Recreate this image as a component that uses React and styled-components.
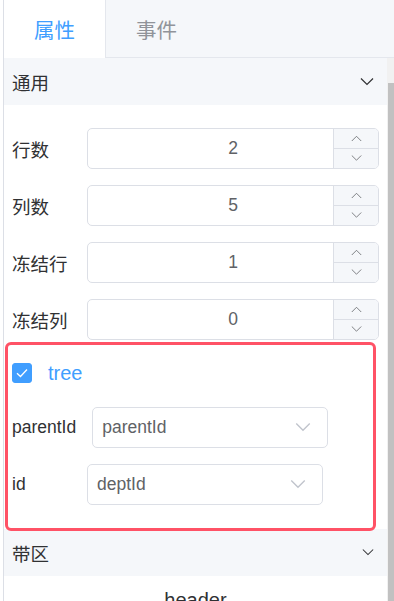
import React, { useState } from "react";
import styled, { createGlobalStyle } from "styled-components";

const GlobalStyle = createGlobalStyle`
  html, body {
    margin: 0;
    padding: 0;
    background: #ffffff;
  }
  body {
    font-family: "Liberation Sans", "Noto Sans CJK SC", sans-serif;
  }
`;

const Page = styled.div`
  width: 394px;
  height: 601px;
  overflow: hidden;
  padding-left: 3px;
  box-sizing: border-box;
  background: #ffffff;
`;

const Frame = styled.div`
  height: 100%;
  border-left: 1px solid #dcdfe6;
  display: flex;
  flex-direction: column;
`;

const TabBar = styled.div`
  display: flex;
  height: 58px;
  flex-shrink: 0;
  background: #f5f7fa;
  border-bottom: 1px solid #e4e7ed;
  box-sizing: border-box;
`;

const Tab = styled.div`
  padding: 0 30px;
  display: flex;
  align-items: center;
  font-size: 20.5px;
  color: ${(p) => (p.$active ? "#409eff" : "#909399")};
  background: ${(p) => (p.$active ? "#ffffff" : "transparent")};
  border-right: 1px solid ${(p) => (p.$active ? "#e4e7ed" : "transparent")};
  margin-bottom: ${(p) => (p.$active ? "-1px" : "0")};
  cursor: pointer;
`;

const Body = styled.div`
  flex: 1;
  display: flex;
  min-height: 0;
`;

const Content = styled.div`
  flex: 1;
  overflow: hidden;
`;

const Scrollbar = styled.div`
  width: 7px;
  background: #f1f1f1;
  display: flex;
  justify-content: flex-end;
  padding-top: 25px;
  box-sizing: border-box;
`;

const Thumb = styled.div`
  width: 6px;
  height: 100%;
  background: #c1c1c1;
`;

const SectionHeader = styled.div`
  height: 47px;
  display: flex;
  align-items: center;
  justify-content: space-between;
  padding: 0 13px 0 8px;
  background: #f5f7fa;
  font-size: 18.5px;
  color: #303133;
`;

const SectionBody = styled.div`
  padding: 23px 8px 0 8px;
  display: flex;
  flex-direction: column;
  gap: 16px;
`;

const Row = styled.div`
  display: flex;
  align-items: center;
  padding-left: ${(p) => (p.$inset ? "4px" : "0")};
`;

const Label = styled.div`
  min-width: 75px;
  padding-right: 16px;
  box-sizing: border-box;
  font-size: ${(p) => (p.$latin ? "17.5px" : "18.5px")};
  color: #303133;
  white-space: nowrap;
`;

const NumberBox = styled.div`
  flex: 1;
  height: 41px;
  border: 1px solid #dcdfe6;
  border-radius: 5px;
  box-sizing: border-box;
  display: flex;
  position: relative;
  overflow: hidden;
`;

const NumberValue = styled.div`
  position: absolute;
  inset: 0;
  display: flex;
  align-items: center;
  justify-content: center;
  font-size: 17.5px;
  color: #606266;
`;

const Spinner = styled.div`
  margin-left: auto;
  width: 44px;
  border-left: 1px solid #dcdfe6;
  background: #f5f7fa;
  display: flex;
  flex-direction: column;
  position: relative;
  z-index: 1;
`;

const SpinButton = styled.div`
  flex: 1;
  display: flex;
  align-items: center;
  justify-content: center;
  border-top: ${(p) => (p.$down ? "1px solid #dcdfe6" : "none")};
`;

const TreeBox = styled.div`
  position: relative;
  z-index: 2;
  margin: -14px 3px -2px -7px;
  border: 3px solid #ff5266;
  border-radius: 6px;
  padding: 18px 0 23px 0;
  display: flex;
  flex-direction: column;
  gap: 16px;
`;

const CheckRow = styled.label`
  display: flex;
  align-items: center;
  gap: 16px;
  padding-left: 4px;
  height: 20px;
  margin-bottom: 8px;
  cursor: pointer;
`;

const CheckBox = styled.span`
  width: 20px;
  height: 20px;
  border-radius: 3px;
  background: ${(p) => (p.$checked ? "#409eff" : "#ffffff")};
  border: 1px solid ${(p) => (p.$checked ? "#409eff" : "#dcdfe6")};
  box-sizing: border-box;
  display: flex;
  align-items: center;
  justify-content: center;
`;

const CheckText = styled.span`
  font-size: 20px;
  color: #409eff;
`;

const SelectBox = styled.div`
  width: 236px;
  height: 41px;
  border: 1px solid #dcdfe6;
  border-radius: 5px;
  box-sizing: border-box;
  display: flex;
  align-items: center;
  justify-content: space-between;
  padding: 0 16px 0 9px;
  font-size: 17.5px;
  color: #606266;
`;

const BandList = styled.div`
  padding-top: 13px;
  display: flex;
  flex-direction: column;
  align-items: center;
  font-size: 20px;
  color: #303133;
`;

const Chevron = ({ size = 14, color = "#303133", up = false, width = 1.2 }) => (
  <svg width={size} height={size / 2 + 1} viewBox="0 0 14 8" fill="none">
    <path
      d={up ? "M1 7.5L7 1.5L13 7.5" : "M1 0.5L7 6.5L13 0.5"}
      stroke={color}
      strokeWidth={width}
    />
  </svg>
);

const Check = () => (
  <svg width="12" height="10" viewBox="0 0 12 10" fill="none">
    <path d="M1 5.2L4.5 8.5L11 1.5" stroke="#ffffff" strokeWidth="1.3" />
  </svg>
);

const NumberInput = ({ label, value }) => (
  <Row>
    <Label>{label}</Label>
    <NumberBox>
      <NumberValue>{value}</NumberValue>
      <Spinner>
        <SpinButton>
          <Chevron size={11} up color="#606266" width={1} />
        </SpinButton>
        <SpinButton $down>
          <Chevron size={11} color="#606266" width={1} />
        </SpinButton>
      </Spinner>
    </NumberBox>
  </Row>
);

const SelectField = ({ label, value }) => (
  <Row $inset>
    <Label $latin>{label}</Label>
    <SelectBox>
      <span>{value}</span>
      <Chevron size={16} color="#c0c4cc" width={1.2} />
    </SelectBox>
  </Row>
);

export default function App() {
  const [tab, setTab] = useState(0);
  const [tree, setTree] = useState(true);

  const numbers = [
    { label: "行数", value: 2 },
    { label: "列数", value: 5 },
    { label: "冻结行", value: 1 },
    { label: "冻结列", value: 0 },
  ];

  return (
    <>
      <GlobalStyle />
      <Page>
        <Frame>
          <TabBar>
            <Tab $active={tab === 0} onClick={() => setTab(0)}>
              属性
            </Tab>
            <Tab $active={tab === 1} onClick={() => setTab(1)}>
              事件
            </Tab>
          </TabBar>
          <Body>
            <Content>
              <SectionHeader>
                <span>通用</span>
                <Chevron />
              </SectionHeader>
              <SectionBody>
                {numbers.map((n) => (
                  <NumberInput key={n.label} label={n.label} value={n.value} />
                ))}
                <TreeBox>
                  <CheckRow onClick={() => setTree(!tree)}>
                    <CheckBox $checked={tree}>{tree && <Check />}</CheckBox>
                    <CheckText>tree</CheckText>
                  </CheckRow>
                  <SelectField label="parentId" value="parentId" />
                  <SelectField label="id" value="deptId" />
                </TreeBox>
              </SectionBody>
              <SectionHeader>
                <span>带区</span>
                <Chevron size={12} />
              </SectionHeader>
              <BandList>
                <div>header</div>
              </BandList>
            </Content>
            <Scrollbar>
              <Thumb />
            </Scrollbar>
          </Body>
        </Frame>
      </Page>
    </>
  );
}
